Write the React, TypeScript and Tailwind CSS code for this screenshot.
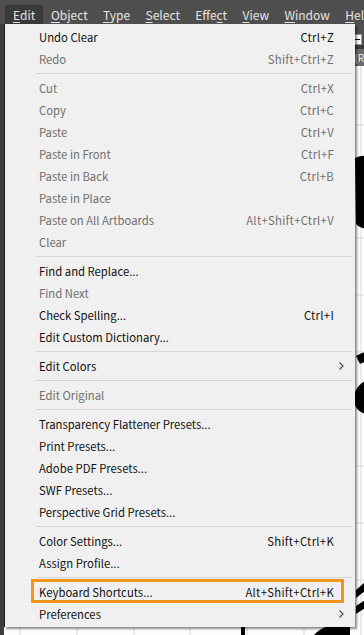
import React from "react";

type MenuEntry =
  | { kind: "sep" }
  | {
      kind: "item";
      label: string;
      shortcut?: string;
      disabled?: boolean;
      submenu?: boolean;
      marked?: boolean;
    };

const entries: MenuEntry[] = [
  { kind: "item", label: "Undo Clear", shortcut: "Ctrl+Z" },
  { kind: "item", label: "Redo", shortcut: "Shift+Ctrl+Z", disabled: true },
  { kind: "sep" },
  { kind: "item", label: "Cut", shortcut: "Ctrl+X", disabled: true },
  { kind: "item", label: "Copy", shortcut: "Ctrl+C", disabled: true },
  { kind: "item", label: "Paste", shortcut: "Ctrl+V", disabled: true },
  { kind: "item", label: "Paste in Front", shortcut: "Ctrl+F", disabled: true },
  { kind: "item", label: "Paste in Back", shortcut: "Ctrl+B", disabled: true },
  { kind: "item", label: "Paste in Place", disabled: true },
  { kind: "item", label: "Paste on All Artboards", shortcut: "Alt+Shift+Ctrl+V", disabled: true },
  { kind: "item", label: "Clear", disabled: true },
  { kind: "sep" },
  { kind: "item", label: "Find and Replace..." },
  { kind: "item", label: "Find Next", disabled: true },
  { kind: "item", label: "Check Spelling...", shortcut: "Ctrl+I" },
  { kind: "item", label: "Edit Custom Dictionary..." },
  { kind: "sep" },
  { kind: "item", label: "Edit Colors", submenu: true },
  { kind: "sep" },
  { kind: "item", label: "Edit Original", disabled: true },
  { kind: "sep" },
  { kind: "item", label: "Transparency Flattener Presets..." },
  { kind: "item", label: "Print Presets..." },
  { kind: "item", label: "Adobe PDF Presets..." },
  { kind: "item", label: "SWF Presets..." },
  { kind: "item", label: "Perspective Grid Presets..." },
  { kind: "sep" },
  { kind: "item", label: "Color Settings...", shortcut: "Shift+Ctrl+K" },
  { kind: "item", label: "Assign Profile..." },
  { kind: "sep" },
  { kind: "item", label: "Keyboard Shortcuts...", shortcut: "Alt+Shift+Ctrl+K", marked: true },
  { kind: "item", label: "Preferences", submenu: true },
];

// menubar titles, with the index of the underlined letter
const titles: [string, number][] = [
  ["Edit", 0],
  ["Object", 0],
  ["Type", 0],
  ["Select", 0],
  ["Effect", 4],
  ["View", 0],
  ["Window", 0],
  ["Help", 0],
];

function Chevron() {
  return (
    <svg width="5" height="8" viewBox="0 0 5 8" className="absolute right-[11px] top-[7px]">
      <polyline points="0.5,0.5 4,4 0.5,7.5" fill="none" stroke="#4a4a4a" strokeWidth="1.1" />
    </svg>
  );
}

function Canvas() {
  const vLines = [20, 77, 134, 190, 247, 304, 361];
  const hLines = [40, 125, 181, 238, 295, 352, 409, 466, 523, 580];
  return (
    <svg className="block w-full h-full" viewBox="0 0 360 569" preserveAspectRatio="none">
      <rect width="360" height="569" fill="#fdfdfd" />
      {vLines.map((x) => (
        <line key={`v${x}`} x1={x - 4} y1="0" x2={x - 4} y2="569" stroke="#d9d9d9" strokeWidth="1" />
      ))}
      {hLines.map((y) => (
        <line key={`h${y}`} x1="0" y1={y - 66} x2="360" y2={y - 66} stroke="#d9d9d9" strokeWidth="1" />
      ))}
      {/* artwork strokes peeking from behind the menu */}
      <path d="M351 92 C360 88 366 90 370 94 L370 162 C362 164 356 162 352 158 Z" fill="#000" />
      <path d="M352 290 C362 284 368 286 370 288 L370 296 C364 296 360 296 356 298 Z" fill="#000" />
      <path d="M370 312 C356 314 348 326 350 336 C352 346 362 350 370 348 Z" fill="#000" />
      <path d="M370 508 L352 524 L352 532 L370 518 Z" fill="#000" />
      <path d="M352 540 L370 528 L370 536 L352 548 Z" fill="#000" />
      <rect x="237" y="558" width="4" height="11" fill="#000" />
      <path d="M310 569 C318 560 332 556 346 558 L346 569 Z" fill="#000" />
    </svg>
  );
}

export default function App() {
  return (
    <div
      className="relative w-[364px] h-[635px] overflow-hidden bg-[#4f4f4f] text-[11.3px]"
      style={{ fontFamily: '"Noto Sans CJK KR", "Noto Sans", sans-serif' }}
    >
      {/* menubar */}
      <div className="flex h-[24px] pl-[5px] text-[#e4e4e4] text-[12px] whitespace-nowrap">
        {titles.map(([t, u], i) => (
          <div
            key={t}
            className={
              i === 0
                ? "h-[19px] mt-[5px] flex items-center px-[7px] bg-[#3a3a3a] border border-[#333] rounded-t-[2px]"
                : "h-[19px] mt-[5px] flex items-center px-[7.7px]"
            }
          >
            <span>
              {t.slice(0, u)}
              <span className="underline underline-offset-2">{t[u]}</span>
              {t.slice(u + 1)}
            </span>
          </div>
        ))}
      </div>

      {/* application body behind the menu */}
      <div className="flex h-[611px]">
        <div className="w-[4px] bg-[#3d3d3d]" />
        <div className="flex-1 flex flex-col">
          <div className="h-[42px] flex flex-col bg-[#505050]">
            <div className="h-[10px]" />
            <div className="h-[11px] mx-[2px] bg-white border border-[#999] flex items-center justify-end pr-[1px]">
              <span className="block w-[6px] h-[1px] bg-black" />
            </div>
            <div className="h-[4px] bg-[#3a3a3a]" />
            <div className="flex-1 bg-[#6b6b6b] text-[10px] leading-[17px] text-[#eee] text-right">(R</div>
          </div>
          <div className="flex-1">
            <Canvas />
          </div>
        </div>
      </div>

      {/* Edit menu */}
      <div className="absolute left-[4px] top-[24px] w-[351px] pt-[2px] pb-[2px] bg-[#f0f0f0] border-l border-[#1e1e1e] shadow-[2px_2px_2px_rgba(0,0,0,0.45)]">
        {entries.map((e, i) =>
          e.kind === "sep" ? (
            <div key={i} className="h-[7px] flex items-center pl-[31px] pr-[3px]">
              <div className="h-px w-full bg-[#d5d5d5]" />
            </div>
          ) : (
            <div
              key={i}
              className={`relative h-[22px] flex items-center justify-between pl-[34px] pr-[21px] ${
                e.disabled ? "text-[#6f6f6f]" : "text-[#111]"
              }`}
            >
              {e.marked && (
                <div className="absolute left-[26px] right-[11px] top-[-2px] bottom-[0px] border-[3px] border-[#f7941d]" />
              )}
              <span className="relative">{e.label}</span>
              {e.shortcut && <span className="relative tracking-[0.3px]">{e.shortcut}</span>}
              {e.submenu && <Chevron />}
            </div>
          )
        )}
      </div>
    </div>
  );
}
